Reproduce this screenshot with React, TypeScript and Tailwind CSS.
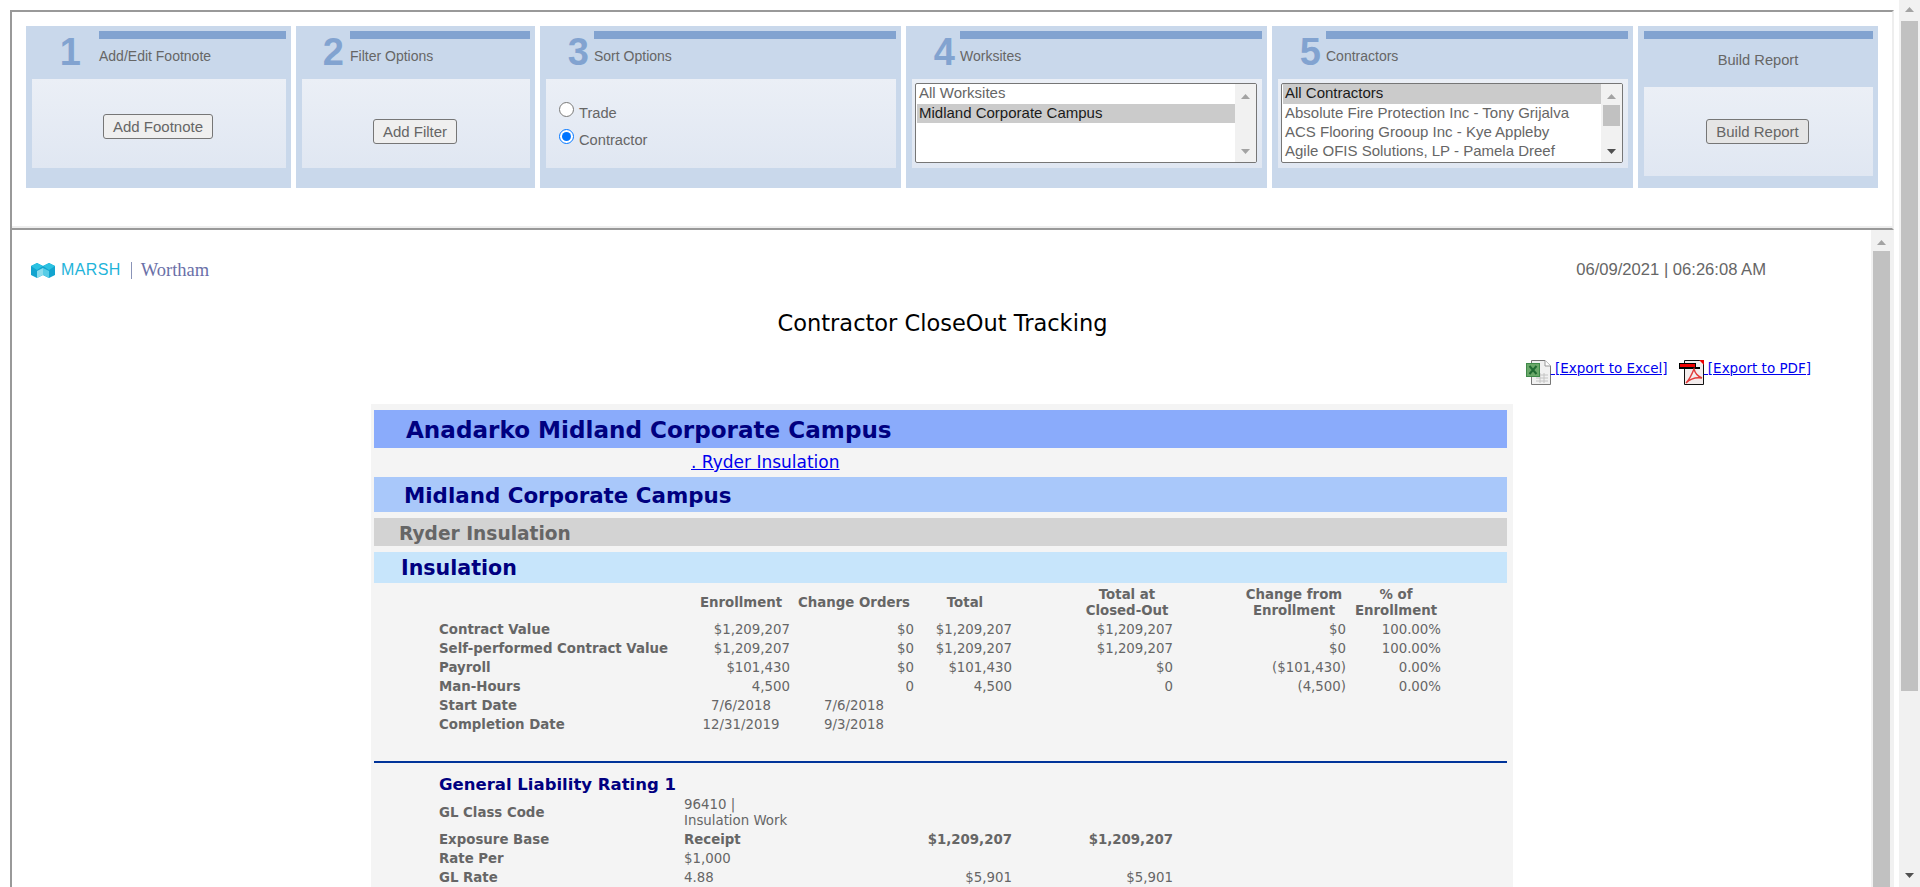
import React from "react";

const SANS = "font-['Liberation_Sans',Arial,sans-serif]";
const VERD = "font-['DejaVu_Sans',Verdana,sans-serif]";

function Tri({ down, color }: { down?: boolean; color: string }) {
  return (
    <svg width="9" height="5" viewBox="0 0 9 5" className="block">
      <polygon points={down ? "0,0 9,0 4.5,5" : "0,5 9,5 4.5,0"} fill={color} />
    </svg>
  );
}

function Head({ n, title, nw, tx }: { n: string; title: string; nw: string; tx: string }) {
  return (
    <div className="flex h-[53px]">
      <div className={`${nw} text-right text-[38px] font-bold leading-[38px] pt-[7px] text-[#82a3d0] ${SANS}`}>{n}</div>
      <div className={`flex-1 flex flex-col ${tx}`}>
        <div className="h-[8px] bg-[#82a3d0] mt-[5px]" />
        <div className={`text-[14px] leading-[16px] mt-[9px] text-[#666] ${SANS}`}>{title}</div>
      </div>
    </div>
  );
}

function Inner({ children, cls }: { children?: React.ReactNode; cls?: string }) {
  return <div className={`h-[89px] bg-linear-to-b from-[#ebeff6] to-[#e0e7f2] ${cls ?? ""}`}>{children}</div>;
}

function Btn({ label, cls }: { label: string; cls?: string }) {
  return (
    <button className={`h-[25px] border border-[#767676] rounded-[3px] text-[15px] leading-[20px] text-[#666] ${SANS} ${cls ?? ""}`}>
      {label}
    </button>
  );
}

function ListBox({ items, selected, thumb, w, sx }: { items: string[]; selected: number; thumb?: boolean; w: string; sx: string }) {
  return (
    <div className={`${w} h-[80px] flex border border-[#767676] rounded-[2px] bg-white overflow-hidden ${SANS}`}>
      <div className="flex-1 pl-[1px]">
        {items.map((t, i) => (
          <div
            key={t}
            className={`text-[15px] pl-[2px] whitespace-nowrap overflow-hidden ${i === selected ? "bg-[#cbcbcb] text-[#1a1a1a]" : "text-[#666]"} ${i === 0 ? "h-[20px] leading-[18px]" : "h-[19px] leading-[18px]"}`}
          >
            {t}
          </div>
        ))}
      </div>
      <div className={`${sx} bg-[#f1f1f1] flex flex-col items-center`}>
        <div className="h-[21px] flex items-center justify-center pt-[3px]">
          <Tri color="#a3a3a3" />
        </div>
        {thumb ? <div className="w-[17px] h-[21px] bg-[#c1c1c1]" /> : null}
        <div className="flex-1" />
        <div className="h-[22px] flex items-center justify-center">
          <Tri down color={thumb ? "#505050" : "#a3a3a3"} />
        </div>
      </div>
    </div>
  );
}

function ExcelIcon() {
  return (
    <svg width="25" height="25" viewBox="0 0 25 25" className="block shrink-0">
      <path d="M5.5 0.5H19L24.5 6V24.5H5.5Z" fill="#f1f1f1" stroke="#777" />
      <path d="M19 0.5V6H24.5" fill="#fff" stroke="#999" />
      <path d="M10 15H22M10 18H22M10 21H22M14 13V23M18 13V23" stroke="#c4c4c4" strokeWidth="1" />
      <rect x="0" y="3" width="14" height="14" fill="#3f8a4a" />
      <rect x="1" y="4" width="12" height="12" fill="#6aa869" />
      <path d="M3.5 6L10.5 14M10.5 6L3.5 14" stroke="#1f6a32" strokeWidth="2" />
    </svg>
  );
}

function PdfIcon() {
  return (
    <svg width="25" height="25" viewBox="0 0 25 25" className="block shrink-0">
      <path d="M5.5 0.5H24.5V24.5H5.5Z" fill="#f3ecec" stroke="#111" />
      <path d="M20 0L25 5V0Z" fill="#ef0000" />
      <rect x="0" y="3" width="17" height="4" fill="#000" />
      <rect x="1" y="4" width="15" height="3" fill="#f00000" />
      <rect x="0" y="7" width="21" height="2" fill="#000" />
      <path d="M15 9C13 14 11 19 7 23C11 19 17 17 23 18C18 16 16 13 15 9Z" fill="none" stroke="#e23a3a" strokeWidth="1.4" />
    </svg>
  );
}

function MarshIcon() {
  return (
    <svg width="24" height="15" viewBox="0 0 24 15" className="block">
      <polygon points="0,3 6,0 12,3 18,0 24,3 24,12 18,15 12,12 6,15 0,12" fill="#12a4cf" />
      <polygon points="6,0 12,3 6,7 0,3" fill="#2cc2e2" />
      <polygon points="18,0 12,3 18,7 24,3" fill="#2cc2e2" />
      <polygon points="6,8 12,5 12,12 6,15" fill="#8bdcec" />
      <polygon points="18,8 12,5 12,12 18,15" fill="#57cce6" />
    </svg>
  );
}

const COLS = "grid grid-cols-[253px_102px_124px_163px_161px_109px_90px]";
const HEAD = ["pr-[4px]", "pr-[4px]", "pr-[69px]", "pr-[69px]", "pr-[5px]", ""];

function HeaderRow({ cells }: { cells: React.ReactNode[] }) {
  return (
    <div className={`${COLS} h-[32px] items-center text-[13.33px] leading-[16px] font-bold text-[#666]`}>
      <div />
      {cells.map((c, i) => (
        <div key={i} className={`text-center whitespace-nowrap ${HEAD[i]}`}>{c}</div>
      ))}
    </div>
  );
}

function Row({ label, cells, center }: { label: string; cells: string[]; center?: boolean }) {
  return (
    <div className={`${COLS} h-[19px] text-[13.33px] leading-[19px] text-[#666]`}>
      <div className="font-bold whitespace-nowrap">{label}</div>
      {cells.map((c, i) => (
        <div key={i} className={`${center ? "text-center" : "text-right"} whitespace-nowrap ${HEAD[i]}`}>{c}</div>
      ))}
    </div>
  );
}

const GL = "grid grid-cols-[245px_193px_135px_161px]";

function GLRow({ label, v, a, b, bold }: { label: string; v: React.ReactNode; a?: string; b?: string; bold?: boolean }) {
  return (
    <div className={`${GL} items-center min-h-[19px] text-[13.33px] leading-[16px] text-[#666]`}>
      <div className="font-bold">{label}</div>
      <div className={bold ? "font-bold" : ""}>{v}</div>
      <div className={`text-right ${bold ? "font-bold" : ""}`}>{a}</div>
      <div className={`text-right ${bold ? "font-bold" : ""}`}>{b}</div>
    </div>
  );
}

export default function App() {
  return (
    <div className="flex h-[887px] overflow-hidden bg-white">
      <div className="w-[1899px] shrink-0 pt-[10px] pl-[10px]">
        <div className="w-[1884px] h-[877px] flex flex-col border-l-2 border-[#999]">
          {/* top pane */}
          <div className="h-[220px] shrink-0 border-t-2 border-b-2 border-t-[#999] border-b-[#999] border-r-2 border-r-[#eeeeee] pt-[14px] pl-[14px] shadow-[inset_0_-2px_0_#eeeeee]">
            <div className="flex gap-[5px]">
              <div className="w-[265px] h-[162px] bg-[#c9d8eb] pr-[5px]">
                <Head n="1" title="Add/Edit Footnote" nw="w-[55px]" tx="ml-[18px]" />
                <Inner cls="ml-[6px] flex justify-center pt-[35px] pr-[2px]">
                  <Btn label="Add Footnote" cls="w-[110px] bg-[#efefef]" />
                </Inner>
              </div>
              <div className="w-[239px] h-[162px] bg-[#c9d8eb] pr-[5px]">
                <Head n="2" title="Filter Options" nw="w-[48px]" tx="ml-[6px]" />
                <Inner cls="ml-[6px] flex justify-center pt-[40px] pr-[2px]">
                  <Btn label="Add Filter" cls="w-[84px] bg-[#efefef]" />
                </Inner>
              </div>
              <div className="w-[361px] h-[162px] bg-[#c9d8eb] pr-[5px]">
                <Head n="3" title="Sort Options" nw="w-[49px]" tx="ml-[5px]" />
                <Inner cls={`ml-[6px] pt-[23px] pl-[13px] text-[14.67px] text-[#666] ${SANS}`}>
                  <label className="flex items-start h-[27px]">
                    <input type="radio" name="s" className="w-[15px] h-[15px] m-0 mr-[5px]" />
                    <span className="leading-[16px] mt-[3px]">Trade</span>
                  </label>
                  <label className="flex items-start h-[27px]">
                    <input type="radio" name="s" defaultChecked className="w-[15px] h-[15px] m-0 mr-[5px]" />
                    <span className="leading-[16px] mt-[3px]">Contractor</span>
                  </label>
                </Inner>
              </div>
              <div className="w-[361px] h-[162px] bg-[#c9d8eb] pr-[5px]">
                <Head n="4" title="Worksites" nw="w-[49px]" tx="ml-[5px]" />
                <Inner cls="ml-[6px] pt-[4px] pl-[3px]">
                  <ListBox w="w-[342px]" sx="w-[21px]" selected={1} items={["All Worksites", "Midland Corporate Campus"]} />
                </Inner>
              </div>
              <div className="w-[361px] h-[162px] bg-[#c9d8eb] pr-[5px]">
                <Head n="5" title="Contractors" nw="w-[49px]" tx="ml-[5px]" />
                <Inner cls="ml-[6px] pt-[4px] pl-[3px]">
                  <ListBox
                    w="w-[342px]"
                    sx="w-[21px]"
                    selected={0}
                    thumb
                    items={[
                      "All Contractors",
                      "Absolute Fire Protection Inc - Tony Grijalva",
                      "ACS Flooring Grooup Inc - Kye Appleby",
                      "Agile OFIS Solutions, LP - Pamela Dreef",
                    ]}
                  />
                </Inner>
              </div>
              <div className="w-[240px] h-[162px] bg-[#c9d8eb] px-[5px] pt-[5px]">
                <div className="h-[8px] bg-[#82a3d0] ml-[1px]" />
                <div className={`h-[48px] pt-[11px] text-center text-[14.67px] leading-[20px] text-[#666] ${SANS}`}>Build Report</div>
                <Inner cls="ml-[1px] flex justify-center pt-[32px] pr-[2px]">
                  <Btn label="Build Report" cls="w-[103px] bg-[#e5e5e5]" />
                </Inner>
              </div>
            </div>
          </div>

          {/* report pane */}
          <div className="flex flex-1 min-h-0">
            <div className="w-[1859px] shrink-0 overflow-hidden">
              <div className="flex justify-between items-center h-[20px] mt-[30px] pl-[19px] pr-[105px]">
                <div className={`flex items-center ${SANS}`}>
                  <MarshIcon />
                  <span className="ml-[6px] text-[16px] tracking-[0.4px] text-[#1fb4da] leading-[16px]">MARSH</span>
                  <span className="ml-[10px] w-[1px] h-[17px] bg-[#8a94b8]" />
                  <span className="ml-[9px] text-[18.5px] text-[#6a70a8] leading-[16px] font-['Liberation_Serif',serif]">Wortham</span>
                </div>
                <div className={`text-[16.6px] text-[#666] ${SANS}`}>06/09/2021 | 06:26:08 AM</div>
              </div>

              <div className={`mt-[28px] h-[30px] pl-[2px] text-center text-[22.5px] leading-[30px] text-black ${VERD}`}>
                Contractor CloseOut Tracking
              </div>

              <div className={`mt-[22px] h-[25px] flex justify-end pr-[60px] text-[13.5px] leading-[16px] text-[#0000ee] ${VERD}`}>
                <ExcelIcon />
                <a className="underline whitespace-pre" href="#x"> [Export to Excel]</a>
                <div className="w-[11px]" />
                <PdfIcon />
                <a className="underline whitespace-pre" href="#p"> [Export to PDF]</a>
              </div>

              <div className={`mt-[19px] ml-[359px] w-[1142px] h-[500px] bg-[#f4f4f4] pt-[6px] pl-[3px] pr-[6px] ${VERD}`}>
                <div className="h-[38px] bg-[#8aabfb] pl-[32px] text-[23.1px] font-bold leading-[40px] text-[#000080]">Anadarko Midland Corporate Campus</div>
                <div className="h-[29px] pl-[317px] text-[17px] leading-[28px]">
                  <a className="underline text-[#0000ee]" href="#r">. Ryder Insulation</a>
                </div>
                <div className="h-[35px] bg-[#a9c8fa] pl-[30px] text-[21.4px] font-bold leading-[37px] text-[#000080]">Midland Corporate Campus</div>
                <div className="h-[28px] mt-[6px] bg-[#d3d3d3] pl-[25px] text-[18.6px] font-bold leading-[31px] text-[#666]">Ryder Insulation</div>
                <div className="h-[31px] mt-[6px] bg-[#c7e5fb] pl-[27px] text-[20.6px] font-bold leading-[33px] text-[#000080]">Insulation</div>

                <div className="pl-[65px]">
                  <div className="mt-[4px]">
                    <HeaderRow
                      cells={[
                        "Enrollment",
                        "Change Orders",
                        "Total",
                        <>Total at<br />Closed-Out</>,
                        <>Change from<br />Enrollment</>,
                        <>% of<br />Enrollment</>,
                      ]}
                    />
                  </div>
                  <div className="mt-[1px]">
                    <Row label="Contract Value" cells={["$1,209,207", "$0", "$1,209,207", "$1,209,207", "$0", "100.00%"]} />
                    <Row label="Self-performed Contract Value" cells={["$1,209,207", "$0", "$1,209,207", "$1,209,207", "$0", "100.00%"]} />
                    <Row label="Payroll" cells={["$101,430", "$0", "$101,430", "$0", "($101,430)", "0.00%"]} />
                    <Row label="Man-Hours" cells={["4,500", "0", "4,500", "0", "(4,500)", "0.00%"]} />
                    <Row label="Start Date" center cells={["7/6/2018", "7/6/2018"]} />
                    <Row label="Completion Date" center cells={["12/31/2019", "9/3/2018"]} />
                  </div>
                </div>

                <div className="h-[2px] mt-[27px] bg-[#003399]" />

                <div className="pl-[65px]">
                  <div className="mt-[11px] h-[20px] text-[16.5px] font-bold leading-[22px] text-[#000080]">General Liability Rating 1</div>
                  <div className="mt-[3px]">
                    <GLRow label="GL Class Code" v={<>96410 |<br />Insulation Work</>} />
                    <div className="h-[1px]" />
                    <GLRow label="Exposure Base" v="Receipt" a="$1,209,207" b="$1,209,207" bold />
                    <GLRow label="Rate Per" v="$1,000" />
                    <GLRow label="GL Rate" v="4.88" a="$5,901" b="$5,901" />
                  </div>
                </div>
              </div>
            </div>

            {/* inner scrollbar */}
            <div className="w-[23px] shrink-0 bg-[#f1f1f1] pl-[2px]">
              <div className="w-[17px] h-[21px] flex items-center justify-center pt-[3px]"><Tri color="#a3a3a3" /></div>
              <div className="w-[17px] h-[700px] bg-[#c1c1c1]" />
            </div>
          </div>
        </div>
      </div>

      {/* page scrollbar */}
      <div className="w-[21px] shrink-0 h-[887px] bg-[#f1f1f1] pl-[2px] flex flex-col">
        <div className="w-[17px] h-[21px] flex items-center justify-center pb-[2px]"><Tri color="#a3a3a3" /></div>
        <div className="w-[17px] h-[670px] bg-[#c1c1c1]" />
        <div className="flex-1" />
        <div className="w-[17px] h-[24px] flex items-center justify-center"><Tri down color="#505050" /></div>
      </div>
    </div>
  );
}
